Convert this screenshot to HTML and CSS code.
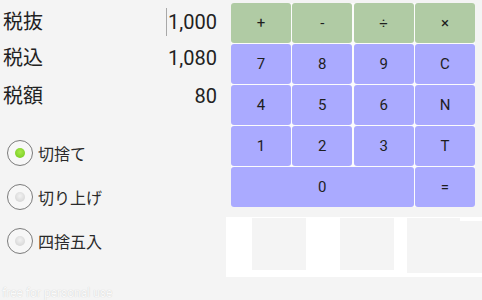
FILE: index.html
```html
<!DOCTYPE html>
<html lang="ja">
<head>
<meta charset="utf-8">
<link rel="stylesheet" href="styles.css">
</head>
<body>
<div class="page">
  <div class="left">
    <div class="field r1">
      <span class="label">税抜</span>
      <span class="value"><span class="cursor"></span>1,000</span>
    </div>
    <div class="field r2">
      <span class="label">税込</span>
      <span class="value">1,080</span>
    </div>
    <div class="field r3">
      <span class="label">税額</span>
      <span class="value">80</span>
    </div>
    <div class="radios">
      <div class="radio"><span class="circle on"><span class="dot"></span></span><span class="rlabel">切捨て</span></div>
      <div class="radio"><span class="circle"><span class="dot"></span></span><span class="rlabel">切り上げ</span></div>
      <div class="radio"><span class="circle"><span class="dot"></span></span><span class="rlabel">四捨五入</span></div>
    </div>
    <div class="free">free for personal use</div>
  </div>
  <div class="right">
    <div class="keypad">
      <div class="key op">+</div>
      <div class="key op">-</div>
      <div class="key op">÷</div>
      <div class="key op">×</div>
      <div class="key">7</div>
      <div class="key">8</div>
      <div class="key">9</div>
      <div class="key">C</div>
      <div class="key">4</div>
      <div class="key">5</div>
      <div class="key">6</div>
      <div class="key">N</div>
      <div class="key">1</div>
      <div class="key">2</div>
      <div class="key">3</div>
      <div class="key">T</div>
      <div class="key zero">0</div>
      <div class="key">=</div>
    </div>
    <div class="adbox">
      <div class="gbox g1"></div>
      <div class="gbox g2"></div>
      <div class="gbox g3"><span class="strip"></span></div>
    </div>
  </div>
</div>
</body>
</html>
```
FILE: styles.css
```css
html, body {
  margin: 0;
  padding: 0;
  background: #f4f4f4;
}
body {
  width: 482px;
  height: 300px;
  overflow: hidden;
  font-family: Roboto, "Noto Sans CJK JP", sans-serif;
  color: #222;
}
.page {
  display: flex;
  height: 300px;
}
.left {
  width: 226px;
  display: flex;
  flex-direction: column;
}
.field {
  display: flex;
  align-items: center;
  justify-content: space-between;
  padding: 0 9px 0 3px;
  font-size: 20px;
}
.r1 { height: 44px; }
.r2 { height: 30px; }
.r3 { height: 48px; }
.label {
  line-height: 1;
}
.value {
  display: flex;
  align-items: center;
  line-height: 1;
}
.cursor {
  display: inline-block;
  width: 1px;
  height: 28px;
  background: #a8a8a8;
  margin-right: 1px;
}
.radios {
  margin-top: 11px;
  display: flex;
  flex-direction: column;
}
.radio {
  height: 44px;
  display: flex;
  align-items: center;
  padding-left: 7px;
  gap: 5px;
}
.circle {
  box-sizing: border-box;
  width: 26px;
  height: 26px;
  border-radius: 50%;
  border: 1.6px solid #7b7b7b;
  background: #f7f7f7;
  display: flex;
  align-items: center;
  justify-content: center;
}
.dot {
  width: 10px;
  height: 10px;
  border-radius: 50%;
  background: radial-gradient(circle at 50% 40%, #f2f2f2, #cfcfcf);
}
.circle.on .dot {
  background: radial-gradient(circle at 50% 40%, #a9ea4c, #6fc71b);
}
.rlabel {
  font-size: 16px;
  line-height: 1;
  padding-top: 3px;
  color: #2a2a2a;
}
.free {
  margin-top: 23px;
  padding-left: 2px;
  font-size: 12px;
  line-height: 14px;
  color: #fafafa;
  text-shadow: 0 0 1px #c4c4c4;
}
.right {
  width: 256px;
  display: flex;
  flex-direction: column;
}
.keypad {
  margin: 3px 0 0 5px;
  width: 244px;
  display: grid;
  grid-template-columns: repeat(4, 60px);
  grid-auto-rows: 40px;
  gap: 1px 1.33px;
  background: #fcfcfc;
  border-radius: 3px;
}
.key {
  background: #aaaaff;
  border-radius: 3px;
  display: flex;
  align-items: center;
  justify-content: center;
  font-size: 15px;
  color: #1e1e1e;
}
.key.op {
  background: #b0cba4;
}
.key.zero {
  grid-column: span 3;
}
.adbox {
  margin-top: 10px;
  height: 60px;
  background: #ffffff;
  display: flex;
  align-items: flex-start;
  padding-top: 1px;
  box-sizing: border-box;
}
.gbox {
  background: #f4f4f4;
}
.g1 {
  margin-left: 26px;
  width: 54px;
  height: 52px;
}
.g2 {
  margin-left: 34px;
  width: 54px;
  height: 52px;
}
.g3 {
  margin-left: 13px;
  flex: 1;
  height: 55px;
  display: flex;
  justify-content: flex-end;
}
.strip {
  width: 22px;
  height: 3px;
  background: #ffffff;
}
```
